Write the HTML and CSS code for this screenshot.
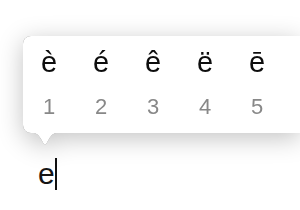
FILE: index.html
```html
<!DOCTYPE html>
<html>
<head>
<meta charset="utf-8">
<link rel="stylesheet" href="styles.css">
</head>
<body>
<div class="stage">
  <div class="popover">
    <div class="panel">
      <div class="row letters">
        <span class="cell">è</span>
        <span class="cell">é</span>
        <span class="cell">ê</span>
        <span class="cell">ë</span>
        <span class="cell">ē</span>
      </div>
      <div class="row digits">
        <span class="cell">1</span>
        <span class="cell">2</span>
        <span class="cell">3</span>
        <span class="cell">4</span>
        <span class="cell">5</span>
      </div>
    </div>
    <svg class="arrow" width="34" height="15" viewBox="0 0 34 15">
      <path d="M0 0 C7 0 10 2 13 7 L15.6 11.8 Q17 14 18.4 11.8 L21 7 C24 2 27 0 34 0 Z" fill="#ffffff"/>
    </svg>
  </div>
  <div class="field"><span class="text">e</span><span class="caret"></span></div>
</div>
</body>
</html>
```
FILE: styles.css
```css
html, body {
  margin: 0;
  padding: 0;
  background: #ffffff;
}
body {
  width: 300px;
  height: 210px;
  overflow: hidden;
  font-family: "Liberation Sans", Arial, sans-serif;
}
.stage {
  padding: 36px 0 0 23px;
}
.popover {
  position: relative;
  width: 277px;
  filter: drop-shadow(0 0 0.6px rgba(0, 0, 0, 0.5)) drop-shadow(0 5px 12px rgba(0, 0, 0, 0.24));
}
.panel {
  background: #ffffff;
  border-radius: 8px 0 0 8px;
  padding: 9px 0 0 0;
  height: 97px;
  box-sizing: border-box;
}
.row {
  display: flex;
}
.cell {
  width: 52px;
  text-align: center;
}
.letters {
  font-size: 29px;
  line-height: 34px;
  color: #0d0d0d;
}
.digits {
  margin-top: 15px;
  font-size: 22px;
  line-height: 26px;
  color: #888888;
}
.arrow {
  position: absolute;
  left: 5px;
  top: 96px;
  display: block;
}
.field {
  margin-top: 24px;
  padding-left: 15px;
  display: flex;
  align-items: flex-start;
  font-size: 30px;
  line-height: 34px;
  color: #151515;
}
.caret {
  display: block;
  width: 2px;
  height: 32px;
  margin-top: 1px;
  background: #111111;
}
```
